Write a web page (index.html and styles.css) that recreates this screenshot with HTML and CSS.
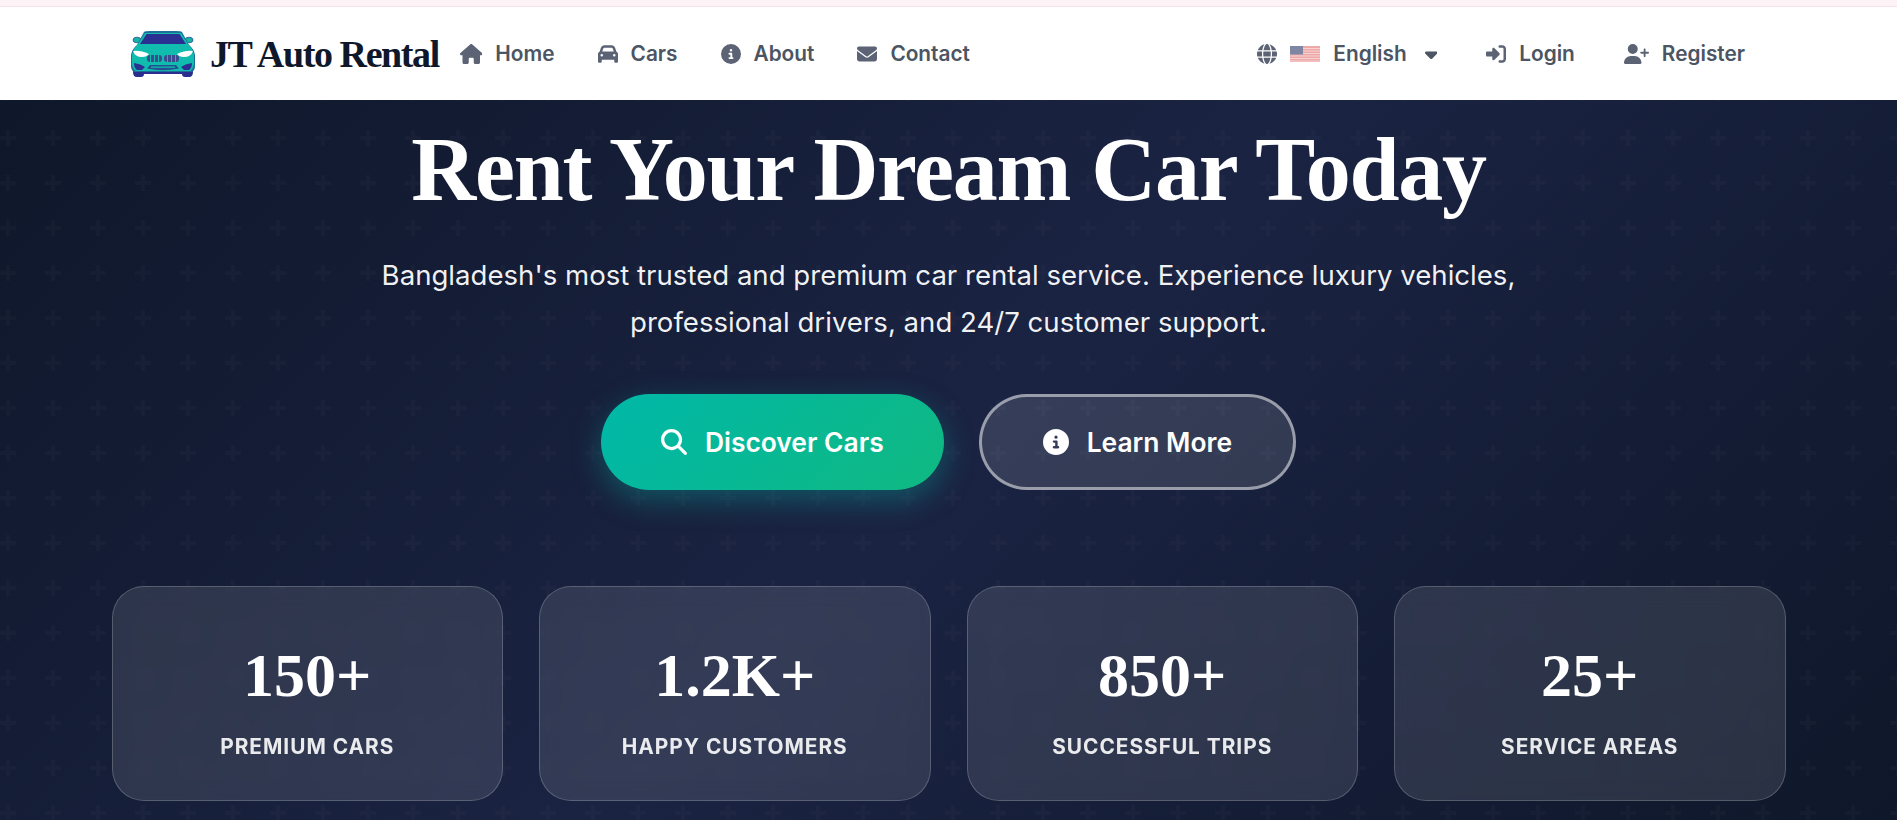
FILE: index.html
```html
<!DOCTYPE html>
<html lang="en">
<head>
<meta charset="utf-8">
<title>JT Auto Rental</title>
<link rel="stylesheet" href="styles.css">
</head>
<body>
<div class="top-strip"></div>
<header class="navbar">
  <a class="brand" href="#">
    <svg class="brand-logo" viewBox="0 0 66 48" aria-hidden="true">
      <ellipse cx="7" cy="10" rx="4" ry="2.800" fill="#16b3a8" stroke="#2a4f8f" stroke-width=".8"/>
      <ellipse cx="59" cy="10" rx="4" ry="2.800" fill="#16b3a8" stroke="#2a4f8f" stroke-width=".8"/>
      <path d="M3 35 V42 Q3 47 7 47 H11 Q14 47 14 44 H52 Q52 47 55 47 H59 Q63 47 63 42 V35 Z" fill="#2a2f8f"/>
      <path d="M14 2 Q15 1 20 1 H46 Q51 1 52 2 L59 15 Q64 19 65 25 V36 Q65 40 62 42 H4 Q1 40 1 36 V25 Q2 19 7 15 Z" fill="#1d6f9a"/>
      <path d="M15 3 H51 L58 14 Q63 19 64 25 V35 Q63 39 60 41 H6 Q3 39 2 35 V25 Q3 19 8 14 Z" fill="#0fbcae"/>
      <path d="M16.500 4 H49.500 L56 14 H10 Z" fill="#2c2f92"/>
      <path d="M3 21 Q10 20 19 24 Q17 27 12 27 Q5 27 3 21 Z" fill="#fff"/>
      <path d="M63 21 Q56 20 47 24 Q49 27 54 27 Q61 27 63 21 Z" fill="#fff"/>
      <rect class="kidney" x="17" y="25" width="15" height="7" rx="3"/>
      <rect class="kidney" x="34" y="25" width="15" height="7" rx="3"/>
      <path d="M20.500 25 V32 M24.500 25 V32 M28.500 25 V32 M37.500 25 V32 M41.500 25 V32 M45.500 25 V32" stroke="#0fbcae" stroke-width="1"/>
      <path d="M4 33 Q11 34 15 37 L12 40 H7 Q4 38 4 33 Z M62 33 Q55 34 51 37 L54 40 H59 Q62 38 62 33 Z" fill="#2c2f92"/>
      <path d="M20 35 H46 L49 38.500 Q33 42 17 38.500 Z" fill="#24508f"/>
      <path d="M21 36.500 H45 V37.800 H21 Z" fill="#0fbcae"/>
    </svg>
    <span class="brand-name">JT Auto Rental</span>
  </a>
  <nav class="nav-main">
    <a class="nav-link" href="#"><svg class="icon i-home" viewBox="0 0 576 512"><path d="M575.800 255.500c0 18-15 32.100-32 32.100h-32l.7 160.200c0 2.700-.2 5.400-.5 8.100V472c0 22.100-17.900 40-40 40H456c-1.100 0-2.200 0-3.300-.1c-1.400 .1-2.800 .1-4.200 .1H416 392c-22.100 0-40-17.900-40-40V448 384c0-17.700-14.300-32-32-32H256c-17.700 0-32 14.300-32 32v64 24c0 22.100-17.900 40-40 40H160 128.100c-1.500 0-3-.1-4.500-.2c-1.200 .1-2.400 .2-3.600 .2H104c-22.100 0-40-17.900-40-40V360c0-.9 0-1.900 .1-2.800V287.600H32c-18 0-32-14-32-32.100c0-9 3-17 10-24L266.400 8c7-7 15-8 22-8s15 2 21 7L564.800 231.500c8 7 12 15 11 24z"/></svg>Home</a>
    <a class="nav-link" href="#"><svg class="icon" viewBox="0 0 512 512"><path d="M135.200 117.400L109.100 192H402.900l-26.100-74.600C372.300 104.600 360.200 96 346.600 96H165.400c-13.600 0-25.700 8.600-30.200 21.400zM39.600 196.800L74.800 96.300C88.300 57.800 124.600 32 165.400 32H346.600c40.800 0 77.100 25.800 90.600 64.300l35.200 100.500c23.200 9.600 39.600 32.500 39.600 59.200V400v48c0 17.700-14.300 32-32 32H448c-17.700 0-32-14.300-32-32V400H96v48c0 17.700-14.300 32-32 32H32c-17.700 0-32-14.300-32-32V400 256c0-26.700 16.400-49.600 39.600-59.200zM128 288a32 32 0 1 0-64 0 32 32 0 1 0 64 0zm288 32a32 32 0 1 0 0-64 32 32 0 1 0 0 64z"/></svg>Cars</a>
    <a class="nav-link" href="#"><svg class="icon" viewBox="0 0 512 512"><path d="M256 512A256 256 0 1 0 256 0a256 256 0 1 0 0 512zM216 336h24V272H216c-13.300 0-24-10.700-24-24s10.700-24 24-24h48c13.300 0 24 10.700 24 24v88h8c13.300 0 24 10.700 24 24s-10.700 24-24 24H216c-13.300 0-24-10.700-24-24s10.700-24 24-24zm40-208a32 32 0 1 1 0 64 32 32 0 1 1 0-64z"/></svg>About</a>
    <a class="nav-link" href="#"><svg class="icon" viewBox="0 0 512 512"><path d="M48 64C21.500 64 0 85.500 0 112c0 15.100 7.100 29.300 19.200 38.400L236.800 313.600c11.400 8.500 27 8.500 38.400 0L492.800 150.400c12.100-9.100 19.200-23.300 19.200-38.400c0-26.500-21.500-48-48-48H48zM0 176V384c0 35.300 28.700 64 64 64H448c35.300 0 64-28.700 64-64V176L294.400 339.200c-22.800 17.100-54 17.100-76.800 0L0 176z"/></svg>Contact</a>
  </nav>
  <div class="nav-right">
    <a class="nav-link lang" href="#">
      <svg class="icon" viewBox="0 0 512 512"><path d="M352 256c0 22.200-1.200 43.600-3.300 64H163.300c-2.200-20.400-3.300-41.800-3.300-64s1.200-43.600 3.300-64H348.700c2.200 20.400 3.300 41.800 3.300 64zm28.800-64H503.900c5.300 20.500 8.100 41.900 8.100 64s-2.800 43.500-8.100 64H380.800c2.100-20.600 3.200-42 3.200-64s-1.100-43.400-3.200-64zm112.600-32H376.700c-10-63.900-29.800-117.400-55.300-151.600c78.300 20.700 142 77.500 171.900 151.600zm-149.100 0H167.700c6.100-36.400 15.500-68.600 27-94.700c10.500-23.600 22.200-40.700 33.500-51.500C239.400 3.200 248.700 0 256 0s16.600 3.200 27.800 13.800c11.300 10.800 23 27.900 33.500 51.500c11.600 26 20.900 58.200 27 94.700zm-209 0H18.600C48.600 85.900 112.200 29.100 190.600 8.400C165.100 42.600 145.300 96.100 135.300 160zM8.100 192H131.200c-2.100 20.600-3.200 42-3.200 64s1.100 43.400 3.200 64H8.100C2.800 299.500 0 278.100 0 256s2.800-43.500 8.100-64zM194.700 446.600c-11.600-26-20.900-58.200-27-94.600H344.300c-6.100 36.400-15.500 68.600-27 94.600c-10.500 23.600-22.200 40.700-33.500 51.500C272.600 508.800 263.300 512 256 512s-16.600-3.200-27.800-13.800c-11.300-10.800-23-27.900-33.500-51.500zM135.300 352c10 63.900 29.800 117.400 55.300 151.600C112.200 482.900 48.600 426.100 18.600 352H135.300zm358.100 0c-30 74.100-93.600 130.900-171.900 151.600c25.500-34.200 45.200-87.700 55.300-151.600H493.400z"/></svg>
      <svg class="flag" viewBox="0 0 30 16" aria-hidden="true">
        <rect width="30" height="16" fill="#efa8a8"/>
        <path d="M0 2.500H30M0 5H30M0 7.500H30M0 10H30M0 12.500H30M0 15H30" stroke="#f6d2d2" stroke-width="1.200"/>
        <rect width="13" height="8.500" fill="#7f86a3"/>
      </svg>
      <span>English</span>
      <svg class="caret" viewBox="0 0 320 512"><path d="M137.400 374.600c12.500 12.500 32.800 12.500 45.300 0l128-128c9.200-9.200 11.900-22.900 6.900-34.900s-16.600-19.800-29.600-19.800L32 192c-12.900 0-24.600 7.800-29.600 19.800s-2.200 25.700 6.900 34.900l128 128z"/></svg>
    </a>
    <a class="nav-link" href="#"><svg class="icon" viewBox="0 0 512 512"><path d="M217.900 105.900L340.700 228.700c7.200 7.200 11.300 17.100 11.300 27.300s-4.100 20.100-11.300 27.300L217.900 406.100c-6.400 6.400-15 9.900-24 9.900c-18.700 0-33.900-15.200-33.900-33.900l0-62.100L32 320c-17.700 0-32-14.300-32-32l0-64c0-17.700 14.300-32 32-32l128 0 0-62.100c0-18.700 15.200-33.900 33.900-33.900c9 0 17.600 3.600 24 9.900zM352 416l64 0c17.700 0 32-14.300 32-32l0-256c0-17.700-14.300-32-32-32l-64 0c-17.700 0-32-14.300-32-32s14.300-32 32-32l64 0c53 0 96 43 96 96l0 256c0 53-43 96-96 96l-64 0c-17.700 0-32-14.300-32-32s14.300-32 32-32z"/></svg>Login</a>
    <a class="nav-link" href="#"><svg class="icon i-user" viewBox="0 0 640 512"><path d="M96 128a128 128 0 1 1 256 0A128 128 0 1 1 96 128zM0 482.300C0 383.800 79.800 304 178.300 304h91.400C368.200 304 448 383.800 448 482.300c0 16.400-13.300 29.700-29.700 29.700H29.700C13.300 512 0 498.700 0 482.300zM504 312V248H440c-13.300 0-24-10.700-24-24s10.700-24 24-24h64V136c0-13.300 10.700-24 24-24s24 10.700 24 24v64h64c13.300 0 24 10.700 24 24s-10.700 24-24 24H552v64c0 13.300-10.700 24-24 24s-24-10.700-24-24z"/></svg>Register</a>
  </div>
</header>
<main class="hero">
  <h1 class="hero-title">Rent Your Dream Car Today</h1>
  <p class="hero-sub">Bangladesh's most trusted and premium car rental service. Experience luxury vehicles, professional drivers, and 24/7 customer support.</p>
  <div class="hero-actions">
    <a class="btn btn-primary" href="#"><svg class="btn-icon" viewBox="0 0 512 512"><path d="M416 208c0 45.900-14.900 88.300-40 122.700L502.600 457.400c12.500 12.500 12.500 32.800 0 45.300s-32.800 12.500-45.300 0L330.700 376c-34.400 25.200-76.800 40-122.700 40C93.100 416 0 322.900 0 208S93.100 0 208 0S416 93.100 416 208zM208 352a144 144 0 1 0 0-288 144 144 0 1 0 0 288z"/></svg>Discover Cars</a>
    <a class="btn btn-ghost" href="#"><svg class="btn-icon" viewBox="0 0 512 512"><path d="M256 512A256 256 0 1 0 256 0a256 256 0 1 0 0 512zM216 336h24V272H216c-13.300 0-24-10.700-24-24s10.700-24 24-24h48c13.300 0 24 10.700 24 24v88h8c13.300 0 24 10.700 24 24s-10.700 24-24 24H216c-13.300 0-24-10.700-24-24s10.700-24 24-24zm40-208a32 32 0 1 1 0 64 32 32 0 1 1 0-64z"/></svg>Learn More</a>
  </div>
  <section class="stats">
    <div class="stat"><div class="stat-num">150+</div><div class="stat-label">PREMIUM CARS</div></div>
    <div class="stat"><div class="stat-num">1.2K+</div><div class="stat-label">HAPPY CUSTOMERS</div></div>
    <div class="stat"><div class="stat-num">850+</div><div class="stat-label">SUCCESSFUL TRIPS</div></div>
    <div class="stat"><div class="stat-num">25+</div><div class="stat-label">SERVICE AREAS</div></div>
  </section>
</main>
</body>
</html>
```
FILE: styles.css
```css
* { box-sizing: border-box; }
html, body { height: 100%; }
body {
  margin: 0;
  padding-right: 2px;
  background: #fff;
  font-family: Inter, "Liberation Sans", sans-serif;
  overflow: hidden;
}
a { color: inherit; text-decoration: none; }

.top-strip {
  height: 7px;
  background: #fdf2f6;
  border-bottom: 1px solid #f5e1e8;
}

.navbar {
  height: 93px;
  display: flex;
  align-items: center;
  padding: 0 152px 0 130px;
  background: #fff;
}
.brand { display: flex; align-items: center; gap: 14px; }
.brand-logo { width: 66px; height: 48px; display: block; }
.brand-name {
  font-family: "Liberation Serif", serif;
  font-weight: 700;
  font-size: 38px;
  color: #0f172a;
  letter-spacing: -1.400px;
  white-space: nowrap;
}
.nav-main { display: flex; gap: 43px; margin-left: 21px; }
.nav-right { display: flex; gap: 49px; margin-left: auto; }
.nav-link {
  display: flex;
  align-items: center;
  gap: 13px;
  font-size: 20.800px;
  font-weight: 600;
  line-height: 24px;
  color: #4b5563;
  white-space: nowrap;
}
.icon { width: 20px; height: 20px; fill: #5b6375; flex: none; display: block; }
.i-home { width: 22.500px; }
.i-user { width: 25px; }
.lang { gap: 13px; }
.flag { width: 30px; height: 16px; display: block; }
.caret { width: 12.500px; height: 20px; fill: #4b5563; margin-left: 5px; }
.kidney { fill: #3c4a8f; }

.hero {
  height: 720px;
  padding-top: 17px;
  display: flex;
  flex-direction: column;
  align-items: center;
  color: #fff;
  background-color: #141c38;
  background-image:
    url("data:image/svg+xml,%3Csvg xmlns='http://www.w3.org/2000/svg' width='45' height='45'%3E%3Cpath d='M6 0h4v6h6v4h-6v6H6v-6H0V6h6z' fill='%23fff' fill-opacity='.018'/%3E%3C/svg%3E"),
    linear-gradient(135deg, #0f172a 0%, #1a2342 50%, #0f172a 100%);
  background-size: 45px 45px, 100% 100%;
  background-position: 0 30px, 0 0;
}
.hero-title {
  margin: 0;
  font-family: "Liberation Serif", serif;
  font-weight: 700;
  font-size: 90px;
  letter-spacing: -1.300px;
  line-height: 106px;
  white-space: nowrap;
}
.hero-sub {
  margin: 29px 0 0;
  width: 1200px;
  font-size: 27.600px;
  line-height: 47px;
  text-align: center;
  color: rgba(255, 255, 255, .95);
}
.hero-actions { display: flex; gap: 35px; margin-top: 48px; }
.btn {
  height: 96px;
  padding: 0 60px;
  border-radius: 50px;
  display: flex;
  align-items: center;
  gap: 18px;
  font-size: 26.400px;
  font-weight: 600;
  color: #fff;
  white-space: nowrap;
}
.btn-icon { width: 26px; height: 26px; fill: #fff; flex: none; }
.btn-primary {
  background: linear-gradient(135deg, #00b8a9, #10b981);
  box-shadow: 0 10px 30px rgba(0, 184, 169, .35);
}
.btn-ghost {
  padding: 0 61px;
  background: rgba(255, 255, 255, .12);
  border: 3px solid rgba(255, 255, 255, .5);
}

.stats {
  display: grid;
  grid-template-columns: repeat(4, 1fr);
  gap: 36px;
  width: 1674px;
  margin-top: 96px;
}
.stat {
  height: 215px;
  border-radius: 32px;
  border: 1px solid rgba(255, 255, 255, .2);
  background: rgba(255, 255, 255, .11);
  backdrop-filter: blur(10px);
  display: flex;
  flex-direction: column;
  align-items: center;
  padding-top: 52px;
}
.stat-num {
  font-family: "Liberation Serif", serif;
  font-weight: 700;
  font-size: 62px;
  line-height: 72px;
}
.stat-label {
  margin-top: 23px;
  font-size: 20.800px;
  font-weight: 700;
  letter-spacing: 1px;
  line-height: 26px;
  color: rgba(255, 255, 255, .9);
}
```
